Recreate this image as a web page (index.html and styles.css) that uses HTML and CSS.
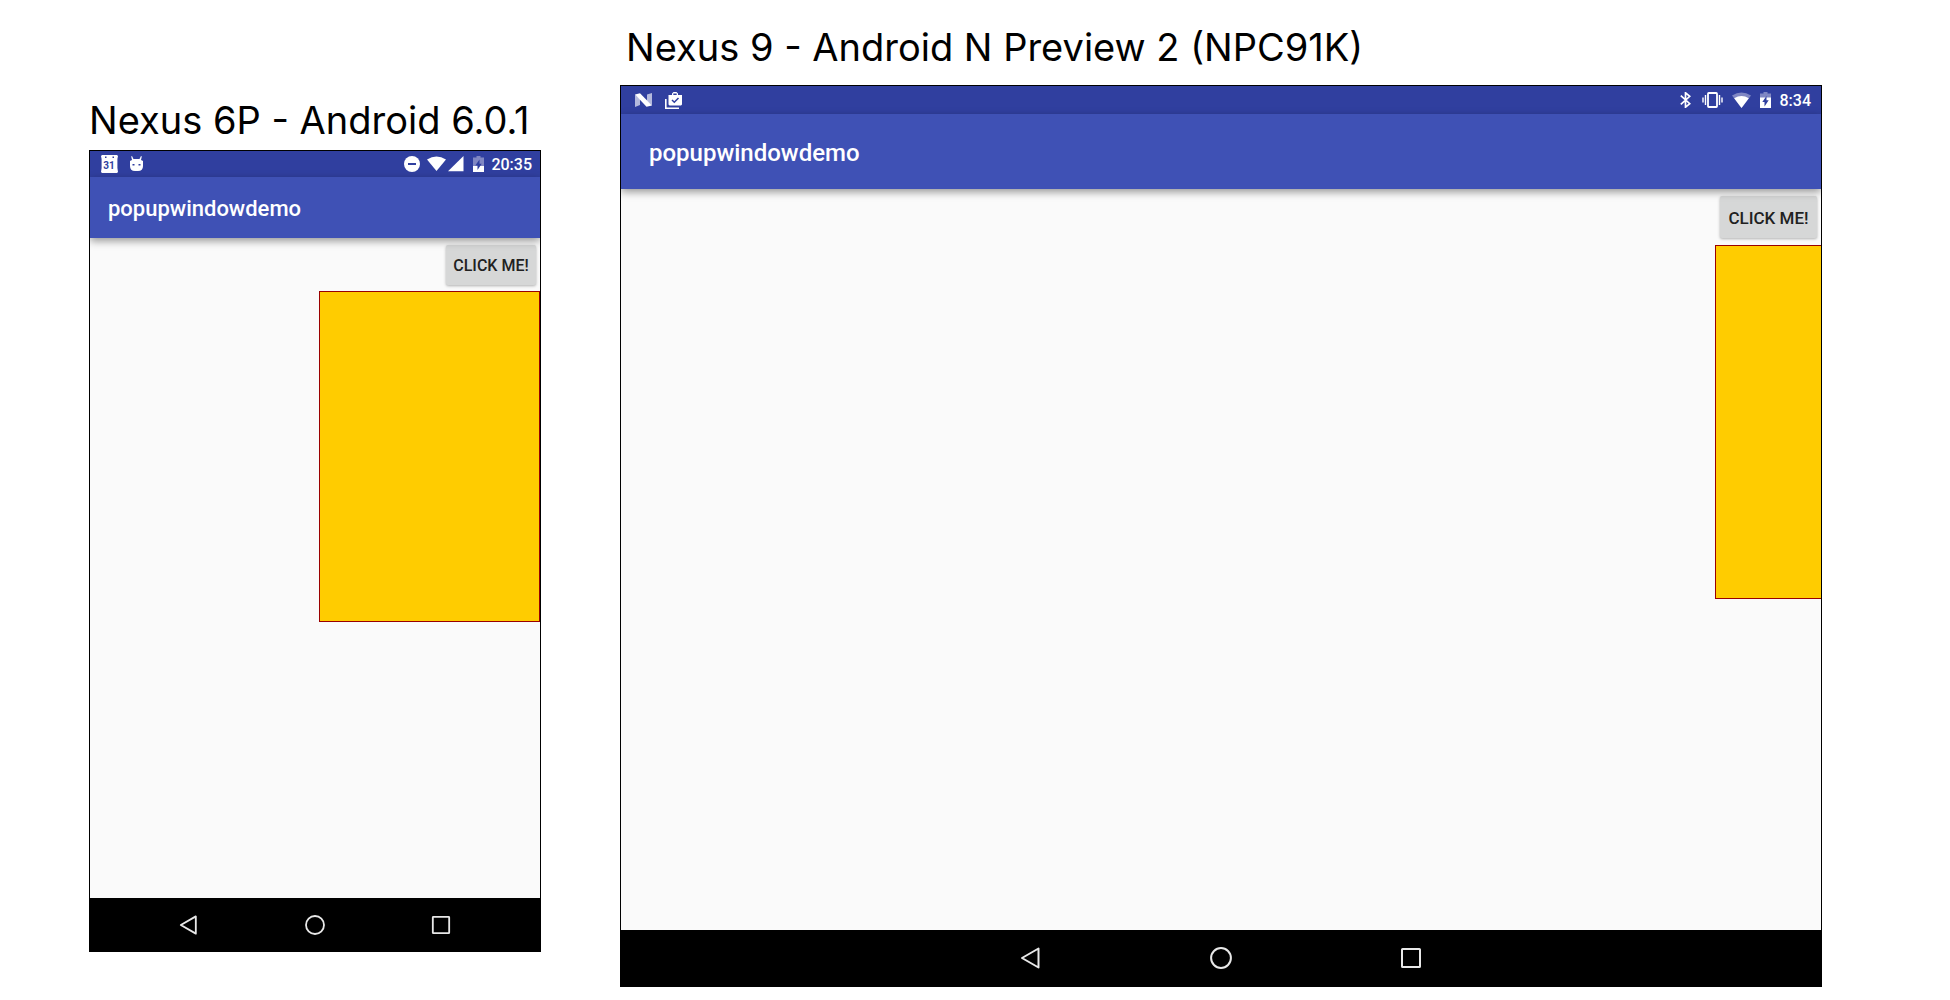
FILE: index.html
```html
<!DOCTYPE html>
<html lang="en">
<head>
<meta charset="utf-8">
<title>popupwindowdemo</title>
<link rel="stylesheet" href="styles.css">
</head>
<body>
<main class="comparison">
  <section class="device phone">
    <h1 class="device-name">Nexus 6P - Android 6.0.1</h1>
    <div class="screen">
      <div class="status-bar">
        <div class="notifications">
          <svg width="17" height="18" viewBox="0 0 17 18"><path fill="#fff" d="M1 0h15l1 1-.6 3v9l.6 4-1 1H1l-1-1 .6-4V4L0 1z"/><path fill="#303f9f" d="M4 1.500h1.500V3H4zM11.500 1.500H13V3h-1.500z"/><text class="calendar-day" x="8" y="14" text-anchor="middle">31</text></svg>
          <svg width="13" height="16" viewBox="0 0 13 16"><path fill="#fff" d="M2 0l1.500 3h6L11 0l.8.5L11 4l2 1v5q0 5-5 5H5q-5 0-5-5V5l2-1-.8-3.500z"/><path fill="#303f9f" d="M2.500 8h2v1.500h-2zM8.500 8h2v1.500h-2z"/></svg>
        </div>
        <div class="system">
          <svg class="dnd" width="16" height="16" viewBox="0 0 16 16"><circle cx="8" cy="8" r="8" fill="#fff"/><path stroke="#303f9f" stroke-width="2" d="M4 8h8"/></svg>
          <svg class="wifi" width="19" height="16" viewBox="0 0 19 16"><path fill="#fff" d="M0 3.500Q9.500-2.500 19 3.500L9.500 15z"/></svg>
          <svg class="cell" width="16" height="16" viewBox="0 0 16 16"><path fill="#fff" d="M0 15.300L15.500 0v15.300z"/></svg>
          <svg class="battery" width="11" height="16" viewBox="0 0 11 16"><path fill="#8087c3" d="M3.500 0h4v1.500H11V10H0V1.500h3.500z"/><path fill="#fff" d="M0 10h11v6H0z"/><path fill="#303f9f" d="M6.500 3.500v4.300h2.200L4.500 14V9.500H2.300z"/></svg>
          <span class="clock">20:35</span>
        </div>
      </div>
      <header class="app-bar">popupwindowdemo</header>
      <div class="content">
        <button class="click-me" type="button">CLICK ME!</button>
        <div class="popup"></div>
      </div>
      <nav class="nav-bar">
        <button type="button" aria-label="Back"><svg viewBox="0 0 22 22"><path d="M18.500 1.500v19L2 11z"/></svg></button>
        <button type="button" aria-label="Home"><svg viewBox="0 0 22 22"><circle cx="11" cy="11" r="9.900"/></svg></button>
        <button type="button" aria-label="Overview"><svg viewBox="0 0 22 22"><rect x="2" y="2" width="18" height="18" rx=".6"/></svg></button>
      </nav>
    </div>
  </section>

  <section class="device tablet">
    <h1 class="device-name">Nexus 9 - Android N Preview 2 (NPC91K)</h1>
    <div class="screen">
      <div class="status-bar">
        <div class="notifications">
          <svg width="17" height="14" viewBox="0 0 17 14"><path fill="#b4b9dd" d="M0 1.500L5 6v6L0 14zM17 0v12.500L12 8V1.500z"/><path fill="#fff" d="M0 1.500L5 .3l12 12.200-5.500 1.200z"/></svg>
          <svg width="17" height="17" viewBox="0 0 17 17" fill="none"><path fill="#fff" fill-rule="evenodd" d="M3.500 3H7V1.500L8.500 0h3L13 1.500V3h4v9.500L16 13.500H4.500l-1-1zM8.300 3h3.400V1.400H8.300z"/><path stroke="#303f9f" stroke-width="1.500" d="M7 8l2.300 2.300L13.500 6"/><path stroke="#fff" stroke-width="1.600" d="M.8 7v9.200H14"/></svg>
        </div>
        <div class="system">
          <svg class="bluetooth" width="11" height="16" viewBox="0 0 11 16" fill="none"><path stroke="#fff" stroke-width="1.700" d="M.8 3.700l9 8L5.500 15.200V.8l4.300 3.500-9 8"/></svg>
          <svg class="vibrate" width="21" height="16" viewBox="0 0 21 16" fill="none"><rect x="6" y="1" width="9" height="14" rx=".8" stroke="#fff" stroke-width="1.800"/><path stroke="#fff" stroke-width="1.400" d="M3.500 3v10M1 5.500v5M17.500 3v10M20 5.500v5"/></svg>
          <svg class="wifi" width="19" height="16" viewBox="0 0 19 16"><path fill="#8087c3" d="M0 3.500Q9.500-2.500 19 3.500L9.500 16z"/><path fill="#fff" d="M2.200 6.300q7.300-4.600 14.600 0L9.500 16z"/></svg>
          <svg class="battery" width="11" height="16" viewBox="0 0 11 16"><path fill="#8087c3" d="M3.500 0h4v1.500H11V6H0V1.500h3.500z"/><path fill="#fff" d="M0 5.500h11V16H0z"/><path fill="#303f9f" d="M6.500 4v4.300h2.200L4.500 14.500V10H2.300z"/></svg>
          <span class="clock">8:34</span>
        </div>
      </div>
      <header class="app-bar">popupwindowdemo</header>
      <div class="content">
        <button class="click-me" type="button">CLICK ME!</button>
        <div class="popup"></div>
      </div>
      <nav class="nav-bar">
        <button type="button" aria-label="Back"><svg viewBox="0 0 22 22"><path d="M18.500 1.500v19L2 11z"/></svg></button>
        <button type="button" aria-label="Home"><svg viewBox="0 0 22 22"><circle cx="11" cy="11" r="9.900"/></svg></button>
        <button type="button" aria-label="Overview"><svg viewBox="0 0 22 22"><rect x="2" y="2" width="18" height="18" rx=".6"/></svg></button>
      </nav>
    </div>
  </section>
</main>
</body>
</html>
```
FILE: styles.css
```css
* { box-sizing: border-box; }

body {
  margin: 0;
  background: #fff;
  font-family: Roboto, "Liberation Sans", sans-serif;
}

.comparison {
  display: grid;
  grid-template-columns: 452fr 1202fr;
  gap: 79px;
  align-items: start;
  padding: 21px 128px 12px 89px;
}

.phone { padding-top: 73px; }

.device-name {
  margin: 0;
  font-family: Inter, sans-serif;
  font-size: 38px;
  font-weight: 400;
  line-height: 52px;
  white-space: nowrap;
  color: #000;
}

.phone .device-name { height: 56px; }
.tablet .device-name { height: 64px; padding-left: 6px; }

.screen {
  display: flex;
  flex-direction: column;
  overflow: hidden;
  border: 1px solid #000;
  background: #fafafa;
}

.phone .screen { aspect-ratio: 452 / 802; }
.tablet .screen { aspect-ratio: 1202 / 902; }

.status-bar {
  display: flex;
  align-items: center;
  justify-content: space-between;
  height: 28px;
  padding: 0 10px 0 14px;
  background: #303f9f;
}

.phone .status-bar { height: 26px; padding: 0 8px 0 11px; }

.notifications, .system {
  display: flex;
  align-items: center;
}

.notifications { gap: 13px; }
.phone .notifications { gap: 12px; }
.system { gap: 9px; }
.phone .system { gap: 7px; }
.phone .cell { margin: 0 2px 0 -5px; }
.bluetooth { margin-right: 2px; }

.calendar-day {
  fill: #303f9f;
  font-size: 10px;
  font-weight: 700;
}

.clock {
  padding-top: 2px;
  font-size: 16px;
  line-height: 20px;
  font-weight: 500;
  color: #fff;
}

.app-bar {
  position: relative;
  height: 75px;
  padding-left: 28px;
  background: #3f51b5;
  box-shadow: 0 3px 8px rgba(0, 0, 0, 0.4);
  color: #fff;
  font-size: 24px;
  font-weight: 500;
  line-height: 78px;
}

.phone .app-bar {
  height: 61px;
  padding-left: 18px;
  font-size: 22px;
  line-height: 64px;
}

.content {
  flex: 1;
  display: flex;
  flex-direction: column;
  align-items: flex-end;
}

.click-me {
  width: 97px;
  height: 42px;
  margin: 7px 4px;
  padding: 2px 0 0;
  border: 0;
  border-radius: 2px;
  background: #d6d7d7;
  box-shadow: 0 1px 3px rgba(0, 0, 0, 0.3);
  color: #212121;
  font: 500 17px/40px Roboto, "Liberation Sans", sans-serif;
}

.phone .click-me {
  width: 90px;
  height: 40px;
  margin: 7px 4px 6px;
  font-size: 16px;
  line-height: 38px;
}

.popup {
  width: 106px;
  height: 354px;
  border: 1px solid #990000;
  border-right: 0;
  background: #ffcc00;
}

.phone .popup {
  width: 221px;
  height: 331px;
  border-right: 1px solid #990000;
}

.nav-bar {
  display: flex;
  align-items: center;
  justify-content: center;
  gap: 168px;
  height: 56px;
  background: #000;
}

.phone .nav-bar { gap: 106px; height: 53px; }

.nav-bar button {
  width: 22px;
  height: 22px;
  padding: 0;
  border: 0;
  background: none;
}

.phone .nav-bar button { width: 20px; height: 20px; }

.nav-bar svg {
  display: block;
  width: 100%;
  fill: none;
  stroke: #e8e8e8;
  stroke-width: 2;
  stroke-linejoin: round;
}
```
